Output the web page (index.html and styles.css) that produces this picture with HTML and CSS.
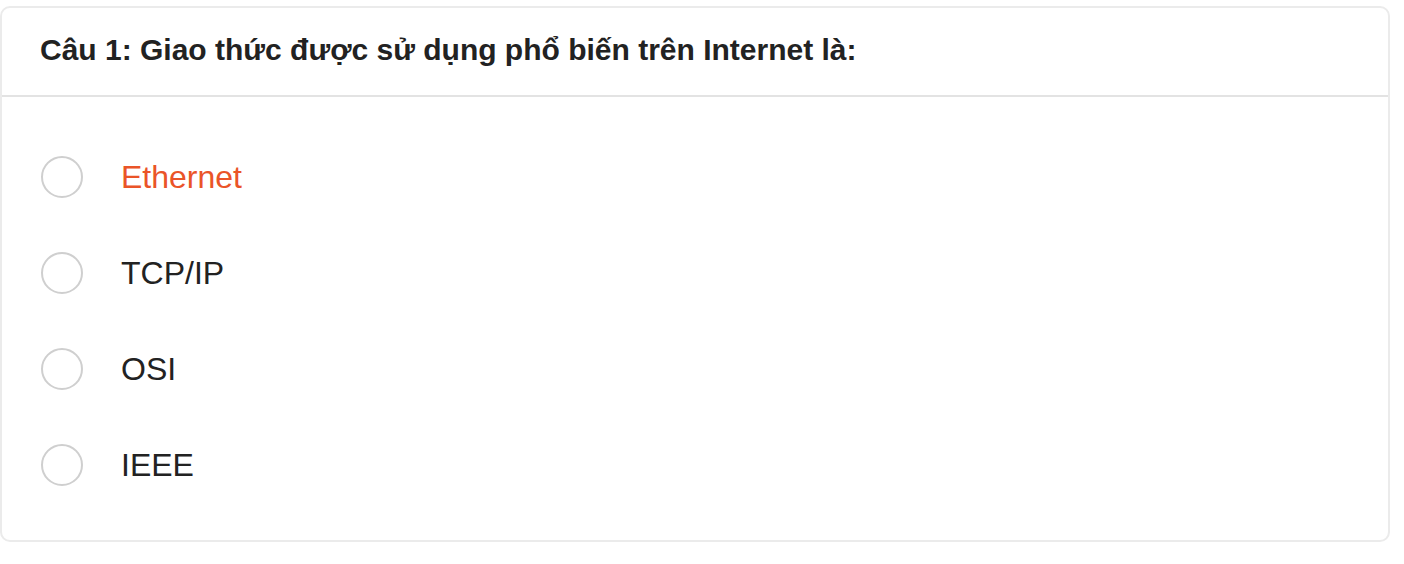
FILE: index.html
```html
<!DOCTYPE html>
<html lang="vi">
<head>
<meta charset="utf-8">
<link rel="stylesheet" href="styles.css">
</head>
<body>
<div class="card">
  <div class="card-header">Câu 1: Giao thức được sử dụng phổ biến trên Internet là:</div>
  <div class="options">
    <label class="option active"><span class="radio"></span><span class="label">Ethernet</span></label>
    <label class="option"><span class="radio"></span><span class="label">TCP/IP</span></label>
    <label class="option"><span class="radio"></span><span class="label">OSI</span></label>
    <label class="option"><span class="radio"></span><span class="label">IEEE</span></label>
  </div>
</div>
</body>
</html>
```

FILE: styles.css
```css
html, body {
  margin: 0;
  padding: 0;
  background: #fff;
}
body {
  padding-top: 6px;
  font-family: "Liberation Sans", Arial, sans-serif;
  color: #222;
}
.card {
  width: 1390px;
  box-sizing: border-box;
  border: 2px solid #ebebeb;
  border-radius: 10px;
  background: #fff;
}
.card-header {
  height: 89px;
  box-sizing: border-box;
  display: flex;
  align-items: center;
  padding: 0 38px 4px;
  font-weight: bold;
  font-size: 30px;
  border-bottom: 2px solid #e3e3e3;
}
.options {
  display: flex;
  flex-direction: column;
  padding: 32px 0 27px;
}
.option {
  height: 96px;
  display: flex;
  align-items: center;
  padding-left: 39px;
  font-size: 32px;
}
.radio {
  width: 42px;
  height: 42px;
  box-sizing: border-box;
  border: 2px solid #cfcfcf;
  border-radius: 50%;
  flex: none;
}
.label {
  margin-left: 38px;
}
.option.active .label {
  color: #ea5428;
}
```
